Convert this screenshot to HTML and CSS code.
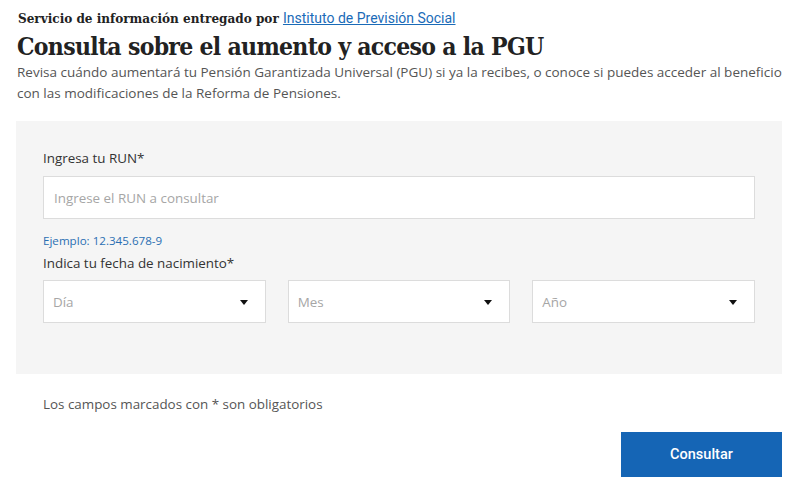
FILE: index.html
```html
<!DOCTYPE html>
<html lang="es">
<head>
<meta charset="utf-8">
<title>Consulta PGU</title>
<link rel="stylesheet" href="styles.css">
</head>
<body>
<main class="page">
  <p class="source">Servicio de información entregado por <a href="#" class="source-link">Instituto de Previsión Social</a></p>
  <h1 class="title">Consulta sobre el aumento y acceso a la PGU</h1>
  <p class="desc">Revisa cuándo aumentará tu Pensión Garantizada Universal (PGU) si ya la recibes, o conoce si puedes acceder al beneficio con las modificaciones de la Reforma de Pensiones.</p>

  <section class="form-box">
    <label class="label" for="run">Ingresa tu RUN*</label>
    <input class="input" id="run" type="text" placeholder="Ingrese el RUN a consultar">
    <p class="hint">Ejemplo: 12.345.678-9</p>
    <p class="label label-date">Indica tu fecha de nacimiento*</p>
    <div class="selects">
      <div class="select"><span class="ph">Día</span><span class="caret"></span></div>
      <div class="select"><span class="ph">Mes</span><span class="caret"></span></div>
      <div class="select"><span class="ph">Año</span><span class="caret"></span></div>
    </div>
  </section>

  <p class="required">Los campos marcados con * son obligatorios</p>
  <div class="actions">
    <button class="btn" type="button">Consultar</button>
  </div>
</main>
</body>
</html>
```

FILE: styles.css
```css
* { box-sizing: border-box; }
html, body { margin: 0; padding: 0; background: #fff; }
.page {
  padding: 9px 18px 0 16px;
  font-family: "Open Sans", "Noto Sans", sans-serif;
  color: #333;
}
.source {
  margin: 0 0 0 2px;
  font-family: "DejaVu Serif", serif;
  font-stretch: condensed;
  font-weight: bold;
  font-size: 13.4px;
  line-height: 18px;
  color: #222;
}
.source-link {
  font-family: Roboto, "Liberation Sans", sans-serif;
  font-stretch: normal;
  font-weight: 400;
  font-size: 14px;
  color: #1a6bb8;
  text-decoration: underline;
}
.title {
  margin: 5px 0 0 1px;
  font-family: "DejaVu Serif", serif;
  font-stretch: condensed;
  font-weight: bold;
  font-size: 24.5px;
  line-height: 30px;
  letter-spacing: -0.7px;
  color: #222;
}
.desc {
  margin: 0 0 0 1px;
  font-size: 13.5px;
  line-height: 21px;
  color: #555;
}
.form-box {
  margin-top: 17px;
  background: #f5f5f5;
  padding: 27px 27px 51px 27px;
  display: flex;
  flex-direction: column;
}
.label {
  display: block;
  margin: 0;
  font-size: 13.4px;
  line-height: 20px;
  color: #333;
}
.input {
  margin-top: 8px;
  height: 43px;
  width: 100%;
  border: 1px solid #dcdcdc;
  background: #fff;
  padding: 0 10px;
  font-family: "Open Sans", "Noto Sans", sans-serif;
  font-size: 13.4px;
  color: #333;
  outline: none;
}
.input::placeholder { color: #a6a6a6; }
.hint {
  margin: 13px 0 0 0;
  font-size: 11.6px;
  line-height: 18px;
  color: #2a6fb3;
}
.label-date { margin-top: 3px; }
.selects {
  margin-top: 7px;
  display: grid;
  grid-template-columns: 1fr 1fr 1fr;
  column-gap: 22px;
}
.select {
  height: 43px;
  background: #fff;
  border: 1px solid #dcdcdc;
  display: flex;
  align-items: center;
  justify-content: space-between;
  padding: 0 17px 0 9px;
}
.ph {
  font-size: 13.4px;
  color: #a6a6a6;
}
.caret {
  width: 0;
  height: 0;
  border-left: 4.5px solid transparent;
  border-right: 4.5px solid transparent;
  border-top: 5px solid #111;
  margin-top: 2px;
}
.required {
  margin: 20px 0 0 27px;
  font-size: 13.4px;
  line-height: 20px;
  color: #555;
}
.actions {
  margin-top: 18px;
  display: flex;
  justify-content: flex-end;
}
.btn {
  width: 161px;
  height: 45px;
  border: 0;
  background: #1565b5;
  color: #fff;
  font-family: Roboto, "Liberation Sans", sans-serif;
  font-weight: 500;
  font-size: 14.5px;
  cursor: pointer;
}
```
